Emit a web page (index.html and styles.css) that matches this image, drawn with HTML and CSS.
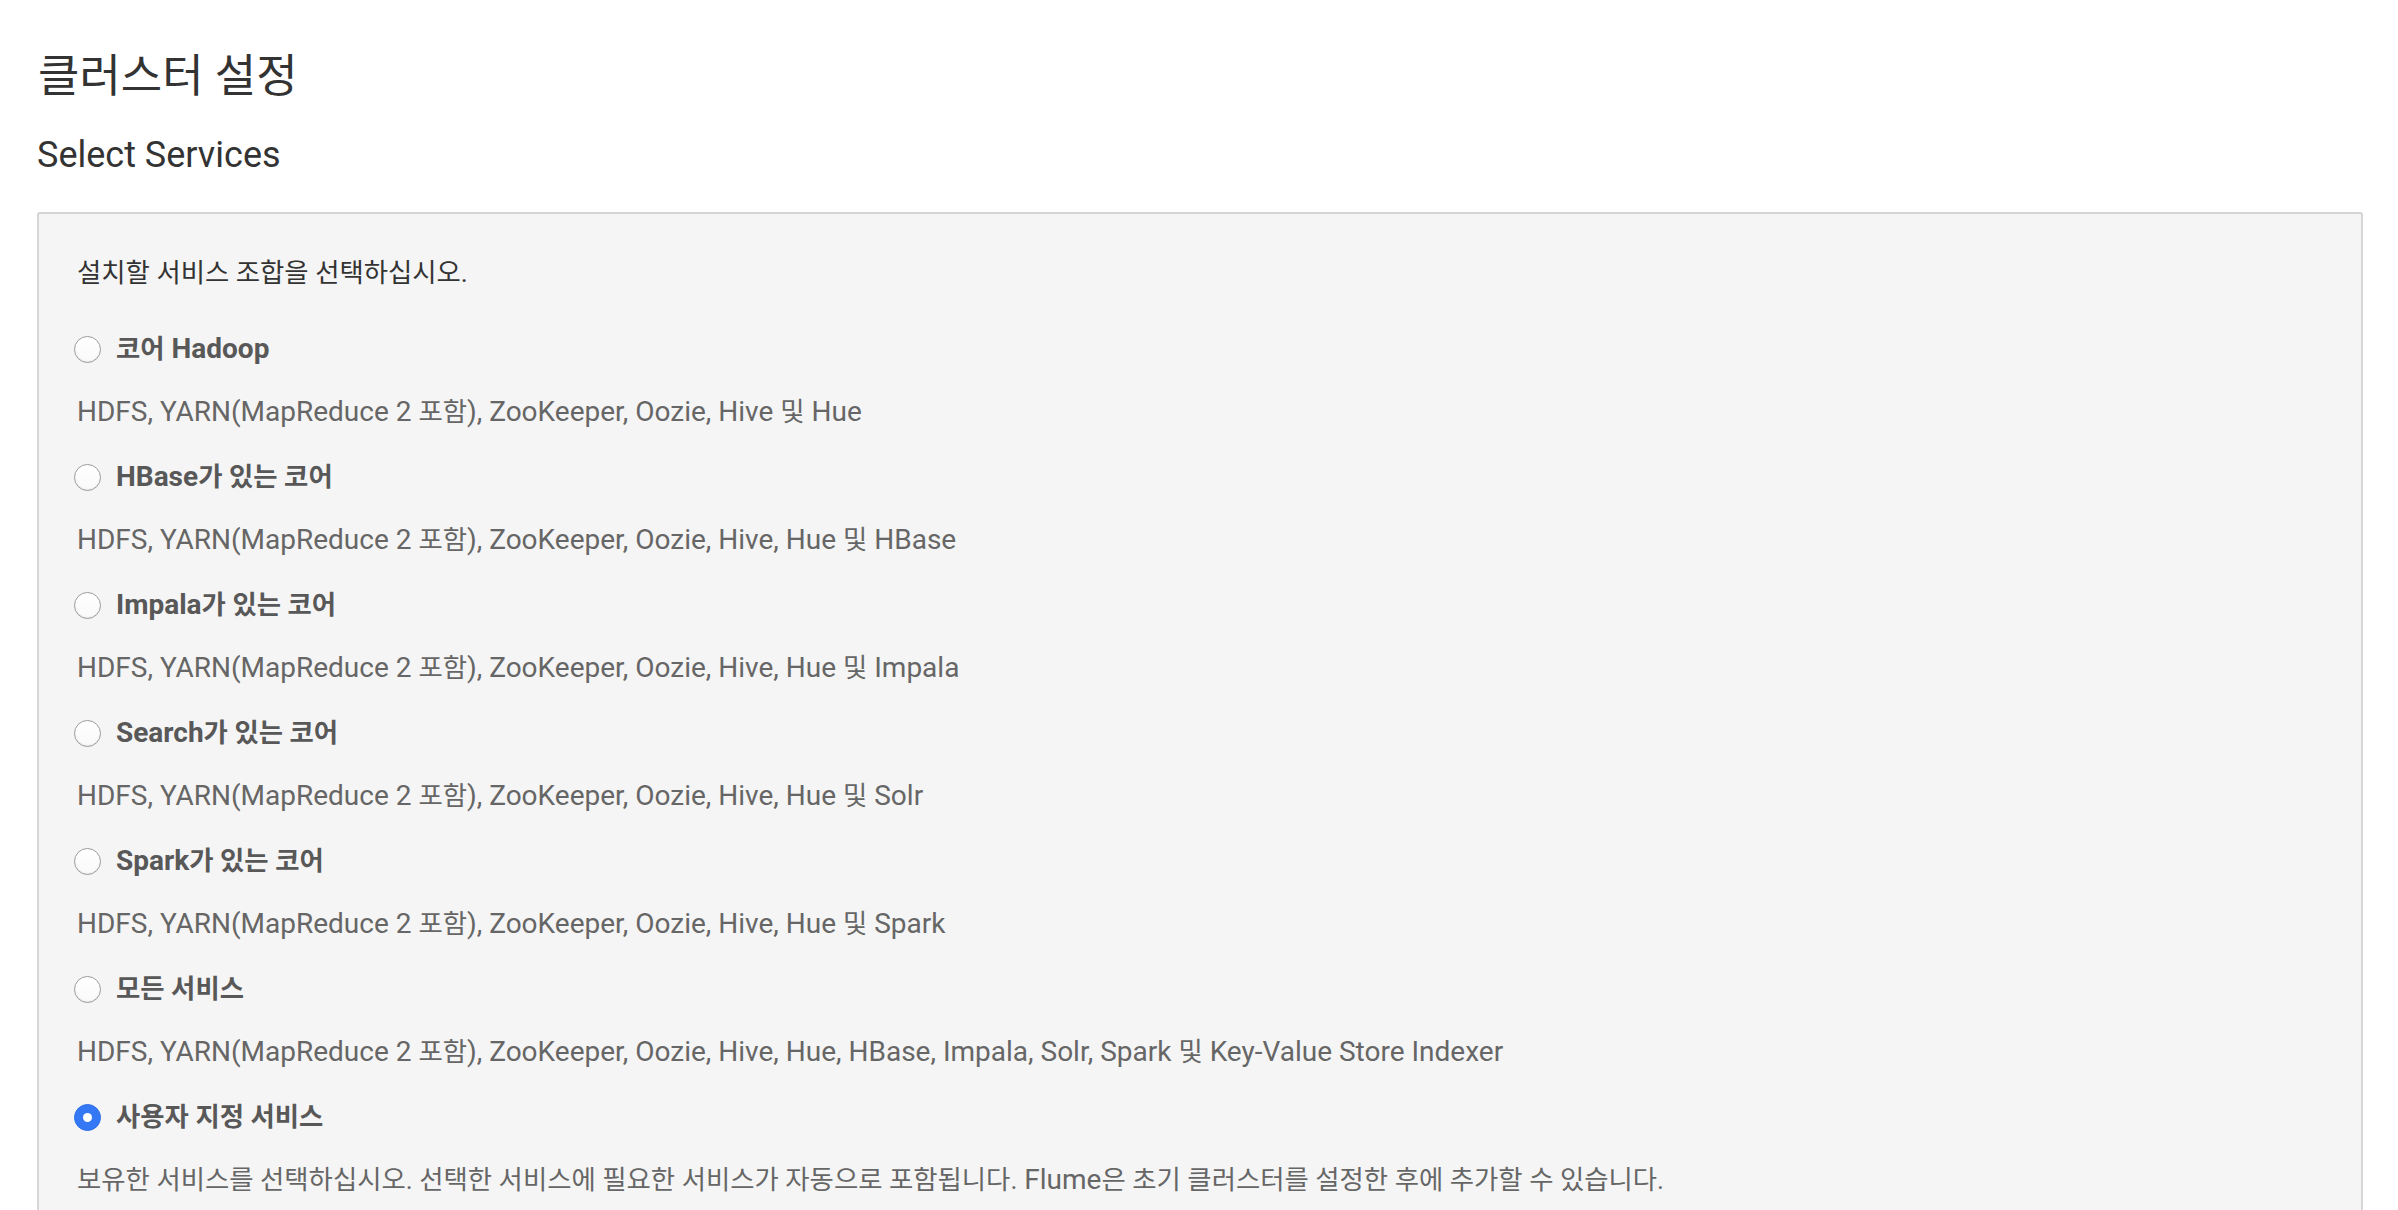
FILE: index.html
```html
<!DOCTYPE html>
<html lang="ko">
<head>
<meta charset="utf-8">
<title>클러스터 설정</title>
<link rel="stylesheet" href="styles.css">
</head>
<body>
<div class="page">
  <h1 class="title">클러스터 설정</h1>
  <h2 class="subtitle">Select Services</h2>
  <div class="panel">
    <p class="intro">설치할 서비스 조합을 선택하십시오.</p>
    <div class="option">
      <label class="opt-label"><span class="radio"></span><span class="opt-name"><span class="ko">코어</span> Hadoop</span></label>
      <p class="desc">HDFS, YARN(MapReduce 2 <span class="ko">포함</span>), ZooKeeper, Oozie, Hive <span class="ko">및</span> Hue</p>
    </div>
    <div class="option">
      <label class="opt-label"><span class="radio"></span><span class="opt-name">HBase<span class="ko">가 있는 코어</span></span></label>
      <p class="desc">HDFS, YARN(MapReduce 2 <span class="ko">포함</span>), ZooKeeper, Oozie, Hive, Hue <span class="ko">및</span> HBase</p>
    </div>
    <div class="option">
      <label class="opt-label"><span class="radio"></span><span class="opt-name">Impala<span class="ko">가 있는 코어</span></span></label>
      <p class="desc">HDFS, YARN(MapReduce 2 <span class="ko">포함</span>), ZooKeeper, Oozie, Hive, Hue <span class="ko">및</span> Impala</p>
    </div>
    <div class="option">
      <label class="opt-label"><span class="radio"></span><span class="opt-name">Search<span class="ko">가 있는 코어</span></span></label>
      <p class="desc">HDFS, YARN(MapReduce 2 <span class="ko">포함</span>), ZooKeeper, Oozie, Hive, Hue <span class="ko">및</span> Solr</p>
    </div>
    <div class="option">
      <label class="opt-label"><span class="radio"></span><span class="opt-name">Spark<span class="ko">가 있는 코어</span></span></label>
      <p class="desc">HDFS, YARN(MapReduce 2 <span class="ko">포함</span>), ZooKeeper, Oozie, Hive, Hue <span class="ko">및</span> Spark</p>
    </div>
    <div class="option">
      <label class="opt-label"><span class="radio"></span><span class="opt-name"><span class="ko">모든 서비스</span></span></label>
      <p class="desc">HDFS, YARN(MapReduce 2 <span class="ko">포함</span>), ZooKeeper, Oozie, Hive, Hue, HBase, Impala, Solr, Spark <span class="ko">및</span> Key-Value Store Indexer</p>
    </div>
    <div class="option">
      <label class="opt-label"><span class="radio radio-checked"></span><span class="opt-name"><span class="ko">사용자 지정 서비스</span></span></label>
      <p class="desc"><span class="ko">보유한 서비스를 선택하십시오. 선택한 서비스에 필요한 서비스가 자동으로 포함됩니다.</span> Flume<span class="ko">은 초기 클러스터를 설정한 후에 추가할 수 있습니다.</span></p>
    </div>
  </div>
</div>
</body>
</html>
```

FILE: styles.css
```css
html, body {
  margin: 0;
  padding: 0;
  background: #ffffff;
}

body {
  font-family: Roboto, "Noto Sans CJK KR", sans-serif;
  color: #333333;
}

.page {
  padding: 0 35px 0 37px;
}

.title {
  margin: 50px 0 0 1px;
  font-size: 45px;
  line-height: 54px;
  font-weight: 400;
  color: #333333;
}

.subtitle {
  margin: 29px 0 35px 0;
  font-size: 36px;
  line-height: 44px;
  font-weight: 400;
  color: #333333;
}

.panel {
  background: #f5f5f5;
  border: 2px solid #d5d5d5;
  border-radius: 3px;
  padding: 39px 38px 40px 38px;
  min-height: 1200px;
}

.intro {
  margin: 0 0 36px 0;
  font-size: 26.4px;
  line-height: 40px;
  color: #333333;
}

.ko {
  font-size: 26.4px;
}

.option {
  display: flex;
  flex-direction: column;
}

.opt-label {
  display: flex;
  align-items: center;
  height: 40px;
  margin-left: -3px;
  gap: 15px;
}

.opt-name {
  font-size: 28px;
  line-height: 40px;
  font-weight: 700;
  color: #585858;
}

.radio {
  width: 25px;
  height: 25px;
  border-radius: 50%;
  border: 1px solid #9c9c9c;
  background: linear-gradient(#ffffff, #f9f9f9);
  box-shadow: inset 0 -1px 1px rgba(0, 0, 0, 0.08);
  flex: none;
  position: relative;
}

.radio-checked {
  border-color: #2f6fe8;
  background: #3478f6;
  box-shadow: none;
}

.radio-checked::after {
  content: "";
  position: absolute;
  left: 50%;
  top: 50%;
  width: 9px;
  height: 9px;
  margin: -4.5px 0 0 -4.5px;
  border-radius: 50%;
  background: #ffffff;
}

.desc {
  margin: 23px 0 25px 0;
  font-size: 28px;
  line-height: 40px;
  color: #666666;
}
```
